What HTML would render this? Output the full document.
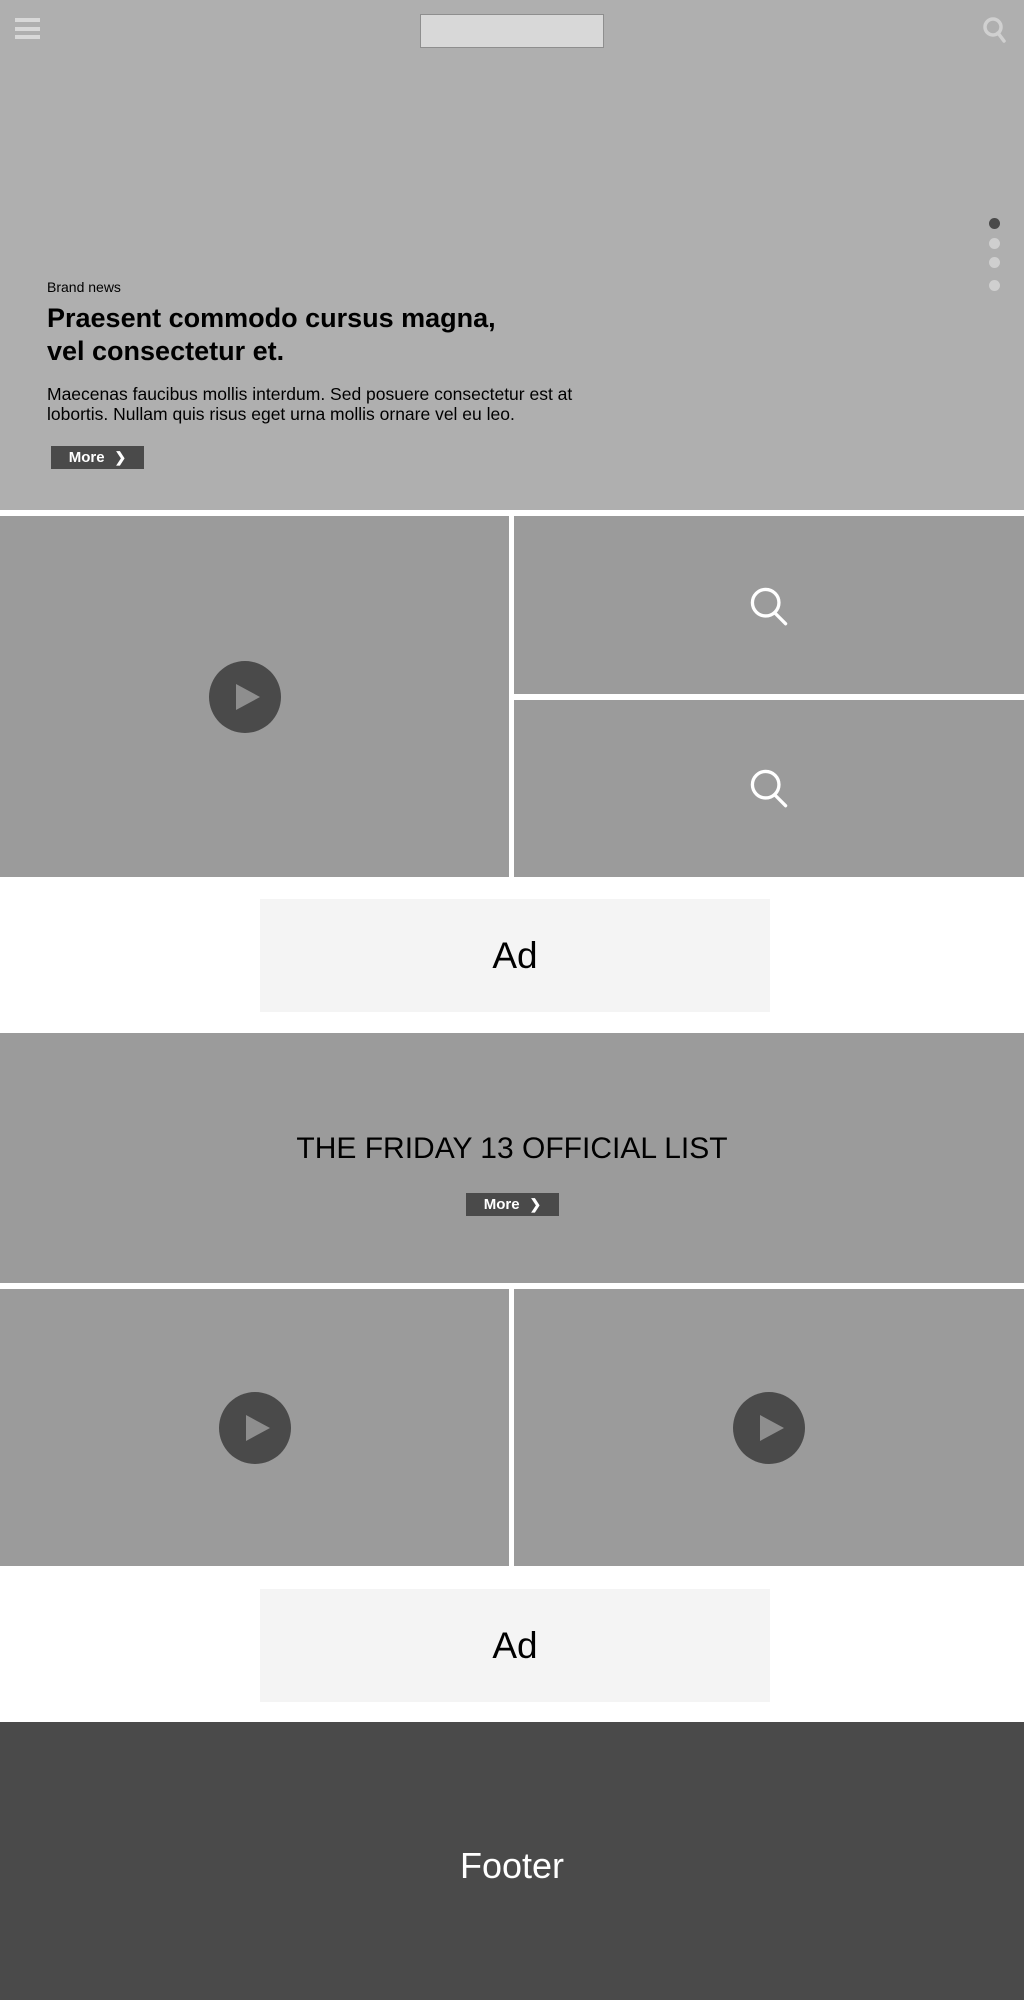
<!DOCTYPE html>
<html><head><meta charset="utf-8"><style>
*{margin:0;padding:0;box-sizing:border-box}
body{width:1024px;height:2000px;background:#fff;font-family:"Liberation Sans",Arial,sans-serif;position:relative;overflow:hidden}
.a{position:absolute}
.tile{position:absolute;background:#9b9b9b}
.play{position:absolute;width:72px;height:72px;border-radius:50%;background:#4a4a4a}
.play:after{content:"";position:absolute;left:27px;top:23px;border-left:24px solid #8e8e8e;border-top:13px solid transparent;border-bottom:13px solid transparent}
.btn{position:absolute;background:#4a4a4a;color:#fff;font-size:15px;font-weight:bold;display:flex;align-items:center;justify-content:center;gap:10px}
.ad{position:absolute;left:260px;width:510px;height:113px;background:#f4f4f4;display:flex;align-items:center;justify-content:center;font-size:37px;color:#000}
.dot{position:absolute;left:989px;width:11px;height:11px;border-radius:50%;background:#cfcfcf}
</style></head><body>
<div class="a" style="left:0;top:0;width:1024px;height:510px;background:#afafaf"></div>
<div class="a" style="left:15px;top:18px;width:25px;height:4px;background:#d8d8d8"></div>
<div class="a" style="left:15px;top:27px;width:25px;height:4px;background:#d8d8d8"></div>
<div class="a" style="left:15px;top:35px;width:25px;height:4px;background:#d8d8d8"></div>
<div class="a" style="left:420px;top:14px;width:184px;height:34px;background:#d8d8d8;border:1px solid #8e8e8e"></div>
<svg class="a" style="left:982px;top:16px" width="26" height="28" viewBox="0 0 26 28"><circle cx="11" cy="11" r="8" fill="none" stroke="#d0d0d0" stroke-width="3.5"/><line x1="16" y1="17" x2="22" y2="25" stroke="#d0d0d0" stroke-width="3.5" stroke-linecap="round"/></svg>
<div class="dot" style="top:218px;background:#4a4a4a"></div>
<div class="dot" style="top:238px"></div>
<div class="dot" style="top:257px"></div>
<div class="dot" style="top:280px"></div>
<div class="a" style="left:47px;top:279px;font-size:14px;color:#000">Brand news</div>
<div class="a" style="left:47px;top:302px;font-size:27px;font-weight:bold;line-height:33px;color:#000">Praesent commodo cursus magna,<br>vel consectetur et.</div>
<div class="a" style="left:47px;top:384px;width:560px;font-size:17.5px;line-height:20px;color:#000">Maecenas faucibus mollis interdum. Sed posuere consectetur est at lobortis. Nullam quis risus eget urna mollis ornare vel eu leo.</div>
<div class="btn" style="left:51px;top:446px;width:93px;height:23px">More <span style="font-size:14px">&#x276F;</span></div>
<div class="tile" style="left:0;top:516px;width:509px;height:361px"></div>
<div class="tile" style="left:514px;top:516px;width:510px;height:178px"></div>
<div class="tile" style="left:514px;top:700px;width:510px;height:177px"></div>
<div class="play" style="left:209px;top:661px"></div>
<svg class="a" style="left:748px;top:585px" width="42" height="42" viewBox="0 0 38 38"><circle cx="16" cy="16" r="12" fill="none" stroke="#fff" stroke-width="3"/><line x1="24" y1="25" x2="34" y2="35" stroke="#fff" stroke-width="3" stroke-linecap="round"/></svg>
<svg class="a" style="left:748px;top:767px" width="42" height="42" viewBox="0 0 38 38"><circle cx="16" cy="16" r="12" fill="none" stroke="#fff" stroke-width="3"/><line x1="24" y1="25" x2="34" y2="35" stroke="#fff" stroke-width="3" stroke-linecap="round"/></svg>
<div class="ad" style="top:899px">Ad</div>
<div class="tile" style="left:0;top:1033px;width:1024px;height:250px"></div>
<div class="a" style="left:0;top:1132px;width:1024px;text-align:center;font-size:30px;color:#000">THE FRIDAY 13 OFFICIAL LIST</div>
<div class="btn" style="left:466px;top:1193px;width:93px;height:23px">More <span style="font-size:14px">&#x276F;</span></div>
<div class="tile" style="left:0;top:1289px;width:509px;height:277px"></div>
<div class="tile" style="left:514px;top:1289px;width:510px;height:277px"></div>
<div class="play" style="left:219px;top:1392px"></div>
<div class="play" style="left:733px;top:1392px"></div>
<div class="ad" style="top:1589px">Ad</div>
<div class="a" style="left:0;top:1722px;width:1024px;height:278px;background:#4a4a4a"></div>
<div class="a" style="left:0;top:1845px;width:1024px;text-align:center;font-size:36px;color:#fff">Footer</div>
</body></html>
